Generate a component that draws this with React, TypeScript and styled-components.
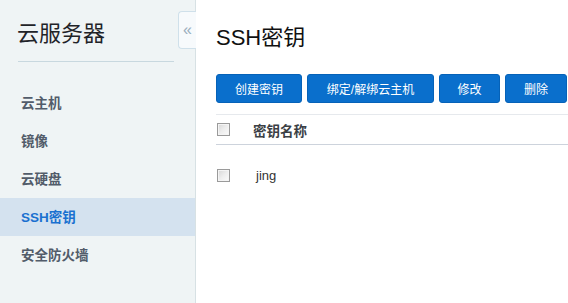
import React from "react";
import styled, { createGlobalStyle } from "styled-components";

// Global
const GlobalStyle = createGlobalStyle`
  html, body {
    margin: 0;
    padding: 0;
    background: #ffffff;
  }
  body {
    font-family: "Liberation Sans", "Noto Sans CJK SC", sans-serif;
  }
`;

// Layout
const Page = styled.div`
  display: flex;
  width: 568px;
  height: 303px;
  overflow: hidden;
`;

// Sidebar
const Sidebar = styled.aside`
  position: relative;
  box-sizing: border-box;
  width: 196px;
  flex-shrink: 0;
  background: #eff4f5;
  border-right: 1px solid #d7e1e4;
`;

const SideTitle = styled.h2`
  margin: 20px 0 0 17px;
  font-size: 22px;
  line-height: 22px;
  font-weight: normal;
  color: #1f2328;
  font-family: "Noto Sans CJK SC", sans-serif;
`;

const Divider = styled.hr`
  margin: 19px 21px 0 18px;
  border: none;
  border-top: 1px solid #c8d8df;
`;

const Menu = styled.ul`
  list-style: none;
  margin: 22px 0 0;
  padding: 0;
`;

const MenuItem = styled.li<{ active?: boolean }>`
  box-sizing: border-box;
  height: 38px;
  line-height: 36px;
  padding: 2px 0 0 21px;
  font-size: 13.5px;
  font-weight: bold;
  font-family: "Liberation Sans", "Noto Sans CJK SC", sans-serif;
  color: ${(p) => (p.active ? "#1a71d0" : "#525c6a")};
  background: ${(p) => (p.active ? "#d4e2ef" : "transparent")};
`;

const CollapseTab = styled.div`
  position: absolute;
  top: 11px;
  right: -1px;
  box-sizing: border-box;
  width: 18px;
  height: 38px;
  display: flex;
  align-items: center;
  justify-content: center;
  background: #f7fafc;
  border: 1px solid #cfe0ea;
  border-right: none;
  border-radius: 4px 0 0 4px;
  color: #9aaebd;
  font-size: 16px;
  line-height: 1;
  font-family: "Liberation Sans", sans-serif;
`;

// Main
const Main = styled.main`
  flex: 1;
  min-width: 0;
  padding-left: 20px;
  overflow: hidden;
`;

const PageTitle = styled.h1`
  margin: 27px 0 0;
  font-size: 22px;
  line-height: 22px;
  font-weight: normal;
  color: #111;
  font-family: "Liberation Sans", "Noto Sans CJK SC", sans-serif;
`;

const Toolbar = styled.div`
  display: flex;
  gap: 5px;
  margin-top: 25px;
  white-space: nowrap;
`;

const Button = styled.button<{ w: number }>`
  box-sizing: border-box;
  flex-shrink: 0;
  width: ${(p) => p.w}px;
  height: 29px;
  padding: 0;
  border: 1px solid #0662b8;
  border-radius: 3px;
  background: #0a6fcc;
  color: #ffffff;
  font-size: 12px;
  font-family: "Liberation Sans", "Noto Sans CJK SC", sans-serif;
`;

const Table = styled.div`
  margin-top: 11px;
  border-top: 1px solid #e6e9ed;
`;

const HeaderRow = styled.div`
  display: flex;
  align-items: center;
  height: 29px;
  border-bottom: 1px solid #cdd3dc;
`;

const Row = styled.div`
  display: flex;
  align-items: center;
  height: 61px;
`;

const CheckCell = styled.div`
  width: 36px;
  padding-left: 1px;
  display: flex;
  align-items: center;
`;

const Checkbox = styled.span`
  box-sizing: border-box;
  display: block;
  width: 13px;
  height: 13px;
  border: 1px solid #9a9a9a;
  background: linear-gradient(135deg, #d6d6d6 0%, #ededed 50%, #fbfbfb 100%);
  box-shadow: inset 0 0 0 1px #f4f4f4;
`;

const HeadCell = styled.div`
  font-size: 13.5px;
  font-weight: bold;
  color: #3b3f45;
  font-family: "Liberation Sans", "Noto Sans CJK SC", sans-serif;
`;

const Cell = styled.div<{ indent?: number }>`
  padding-left: ${(p) => p.indent ?? 0}px;
  font-size: 13px;
  color: #333;
  font-family: "Liberation Sans", "Noto Sans CJK SC", sans-serif;
`;

const menu = ["云主机", "镜像", "云硬盘", "SSH密钥", "安全防火墙"];

const buttons = [
  { label: "创建密钥", w: 86 },
  { label: "绑定/解绑云主机", w: 127 },
  { label: "修改", w: 61 },
  { label: "删除", w: 62 },
];

const keys = ["jing"];

const App: React.FC = () => {
  return (
    <>
      <GlobalStyle />
      <Page>
        <Sidebar>
          <SideTitle>云服务器</SideTitle>
          <Divider />
          <Menu>
            {menu.map((m) => (
              <MenuItem key={m} active={m === "SSH密钥"}>
                {m}
              </MenuItem>
            ))}
          </Menu>
          <CollapseTab>«</CollapseTab>
        </Sidebar>
        <Main>
          <PageTitle>SSH密钥</PageTitle>
          <Toolbar>
            {buttons.map((b) => (
              <Button key={b.label} w={b.w}>
                {b.label}
              </Button>
            ))}
          </Toolbar>
          <Table>
            <HeaderRow>
              <CheckCell>
                <Checkbox />
              </CheckCell>
              <HeadCell>密钥名称</HeadCell>
            </HeaderRow>
            {keys.map((k) => (
              <Row key={k}>
                <CheckCell>
                  <Checkbox />
                </CheckCell>
                <Cell indent={3}>{k}</Cell>
              </Row>
            ))}
          </Table>
        </Main>
      </Page>
    </>
  );
};

export default App;
